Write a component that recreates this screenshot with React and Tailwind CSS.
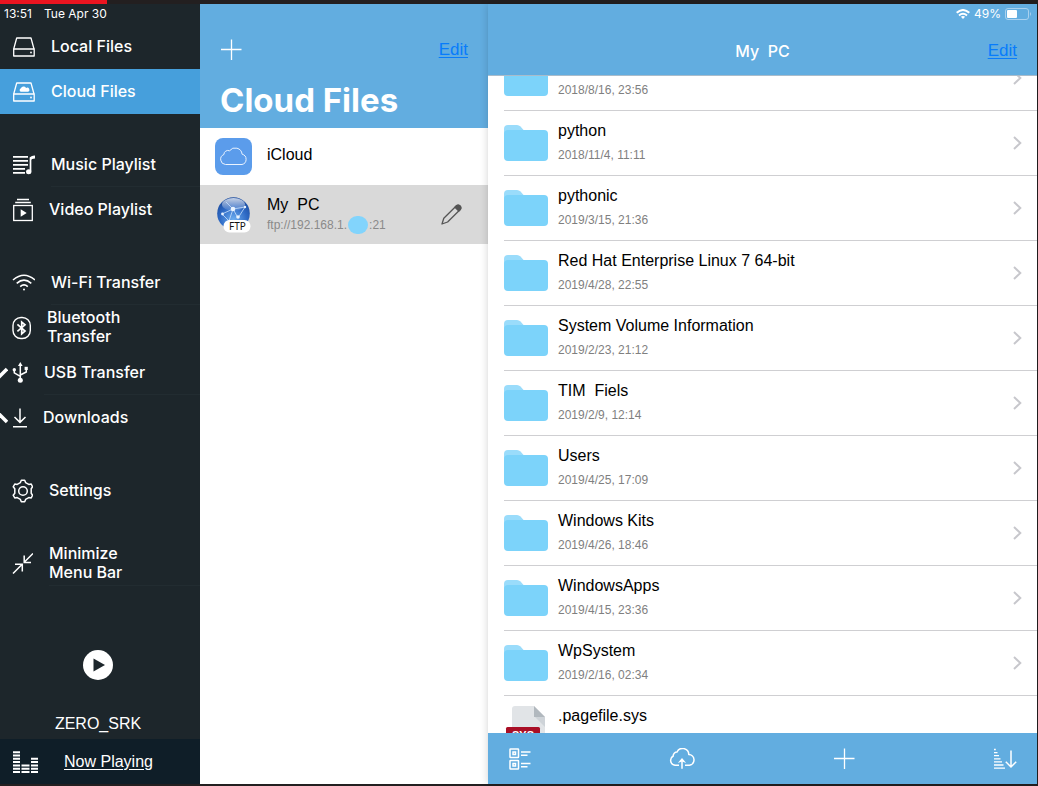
import clsx from 'clsx';

function DriveIcon({ cloud }) {
  return (
    <svg width="23" height="20" viewBox="0 0 23 20" fill="none" stroke="currentColor" strokeWidth="1.3" strokeLinejoin="round">
      <path d="M1.7 12 L4.7 1 H19 L22 12" />
      <rect x="1.7" y="12" width="20.5" height="7" />
      <circle cx="19" cy="15.5" r="0.9" fill="currentColor" stroke="none" />
      {cloud && (
        <path
          d="M8.7 9.8 a1.9 1.9 0 0 1 .2-3.5 a3 3 0 0 1 5.2-.4 a2.1 2.1 0 0 1 2.2 3.9 z"
          fill="currentColor"
          stroke="none"
        />
      )}
    </svg>
  );
}

function MusicListIcon() {
  return (
    <svg width="23" height="20" viewBox="0 0 23 20" fill="none" stroke="currentColor" strokeWidth="1.7">
      <path d="M1 1.8 H16 M1 5.8 H16 M1 9.8 H16 M1 13.8 H13 M1 17.8 H13" />
      <path d="M18.5 16.5 V2.6" />
      <path d="M17.7 2.6 Q18.5 0.8 23 0.4 V3.6 Q19.5 3.8 19.3 5 z" fill="currentColor" stroke="none" />
      <ellipse cx="16.7" cy="16.8" rx="2.7" ry="2.5" fill="currentColor" stroke="none" />
    </svg>
  );
}

function VideoListIcon() {
  return (
    <svg width="21" height="24" viewBox="0 0 21 24" fill="none" stroke="currentColor" strokeWidth="1.3">
      <path d="M5 1.5 H17 M3.2 4.5 H18.8" />
      <rect x="1.7" y="7.5" width="18.6" height="15" />
      <path d="M8.7 11.3 L14.7 15 L8.7 18.7 z" fill="currentColor" stroke="none" />
    </svg>
  );
}

function WifiIcon() {
  return (
    <svg width="23" height="17" viewBox="0 0 23 17" fill="none" stroke="currentColor" strokeWidth="1.6">
      <path d="M1 6 Q12 -3.5 23 6" />
      <path d="M4.7 9.3 Q12 3 19.3 9.3" />
      <path d="M8.2 12.6 Q12 9.2 15.8 12.6" />
      <circle cx="12" cy="15.4" r="1" fill="currentColor" stroke="none" />
    </svg>
  );
}

function BluetoothIcon() {
  return (
    <svg width="19" height="24" viewBox="0 0 19 24" fill="none" stroke="currentColor" strokeWidth="1.4">
      <rect x="1" y="1.5" width="17.3" height="21" rx="8" />
      <path d="M5.4 8.4 L13 15 L9.7 17.8 V6 L13 8.8 L5.4 15.4" strokeWidth="1.7" />
    </svg>
  );
}

function UsbIcon() {
  return (
    <svg width="16" height="21" viewBox="0 0 16 21" fill="none" stroke="currentColor" strokeWidth="1.5">
      <path d="M8.3 3 V17 M2.3 8 V10.8 L8.3 14.4 M14.3 7 V10 L8.3 13" />
      <path d="M8.3 0 L10.6 4 H6 z" fill="currentColor" stroke="none" />
      <circle cx="8.3" cy="18.2" r="2.5" fill="currentColor" stroke="none" />
      <circle cx="2.3" cy="7.8" r="1.7" fill="currentColor" stroke="none" />
      <rect x="12.6" y="4.8" width="3.2" height="3.2" fill="currentColor" stroke="none" />
    </svg>
  );
}

function DownloadIcon() {
  return (
    <svg width="15" height="20" viewBox="0 0 15 20" fill="none" stroke="currentColor" strokeWidth="1.5">
      <path d="M8 0.5 V14 M2.5 9 L8 14.4 L13.5 9 M1 18.8 H15" />
    </svg>
  );
}

function SettingsIcon() {
  return (
    <svg width="21" height="24" viewBox="0 0 21 24" fill="none" stroke="currentColor" strokeWidth="1.5" strokeLinejoin="round">
      <path d="M9.3 1.3 H12.7 L13.6 3.6 L16.8 5.4 L19.2 5 L20.6 7.8 L19.2 9.8 V14.2 L20.6 16.2 L19.2 19 L16.8 18.6 L13.6 20.4 L12.7 22.7 H9.3 L8.4 20.4 L5.2 18.6 L2.8 19 L1.2 16.2 L2.8 14.2 V9.8 L1.2 7.8 L2.8 5 L5.2 5.4 L8.4 3.6 z" />
      <circle cx="11" cy="12" r="4.3" />
    </svg>
  );
}

function MinimizeIcon() {
  return (
    <svg width="21" height="21" viewBox="0 0 21 21" fill="none" stroke="currentColor" strokeWidth="1.5">
      <path d="M21 0.5 L12.2 9.2 M12.2 2.5 V9.4 H19" />
      <path d="M1 20.5 L10.2 11.3 M3 11.2 H10.3 V18.5" />
    </svg>
  );
}

function PlusIcon() {
  return (
    <svg width="22" height="22" viewBox="0 0 22 22" stroke="currentColor" strokeWidth="1.3">
      <path d="M11.5 0.5 V21 M1 10.5 H21.5" />
    </svg>
  );
}

function EqualizerIcon() {
  return (
    <svg width="28" height="22" viewBox="0 0 28 22" stroke="currentColor" strokeWidth="7" strokeDasharray="2 1.3">
      <path d="M4.5 22 V0" />
      <path d="M13.5 22 V13" strokeWidth="8" />
      <path d="M22.5 22 V6" />
    </svg>
  );
}

function ICloudIcon() {
  return (
    <svg width="37" height="37" viewBox="0 0 37 37" fill="none">
      <rect width="37" height="37" rx="8" fill="#5b9ceb" />
      <path
        d="M10.5 26.5 a5.2 5.2 0 0 1 -1.6-10 a4 4 0 0 1 5.6-3.7 a7 7 0 0 1 12.6 3.4 a5.3 5.3 0 0 1 -.1 10.3 z"
        stroke="#eaf3ff"
        strokeWidth="1"
      />
    </svg>
  );
}

function FtpIcon() {
  return (
    <svg width="37" height="37" viewBox="0 0 37 37">
      <defs>
        <radialGradient id="globe" cx="0.5" cy="0.7" r="0.7">
          <stop offset="0" stopColor="#6fb0f2" />
          <stop offset="0.6" stopColor="#2e69c4" />
          <stop offset="1" stopColor="#1b4a9c" />
        </radialGradient>
        <linearGradient id="gloss" x1="0" y1="0" x2="0" y2="1">
          <stop offset="0" stopColor="#ffffff" stopOpacity="0.75" />
          <stop offset="1" stopColor="#ffffff" stopOpacity="0.05" />
        </linearGradient>
      </defs>
      <circle cx="18.5" cy="17.5" r="16.3" fill="url(#globe)" />
      <ellipse cx="18.5" cy="8.5" rx="11.5" ry="6.5" fill="url(#gloss)" />
      <g stroke="#c9e0fb" strokeWidth="0.8" fill="none">
        <path d="M7 18 L18 13 L30 11 M18 13 L23 22 L30 11 M18 13 L11 6 M7 18 L14 25 L18 13" />
      </g>
      <g fill="#e8f3ff">
        <circle cx="18" cy="13" r="2.3" />
        <circle cx="7.5" cy="18" r="1.4" />
        <circle cx="23" cy="21" r="1.8" />
        <circle cx="30" cy="11" r="1.2" />
      </g>
      <rect x="8.5" y="24" width="27" height="12.5" rx="6" fill="#ffffff" />
      <text x="22.5" y="34" textAnchor="middle" fontSize="10" fontFamily="Noto Sans, sans-serif" fill="#111111">
        FTP
      </text>
    </svg>
  );
}

function PencilIcon() {
  return (
    <svg width="21" height="21" viewBox="0 0 21 21" fill="none" stroke="#555555" strokeWidth="1.3" strokeLinejoin="round">
      <path d="M1 20 L2.8 14.3 L15.2 2 Q17.2 0.4 19 2 Q20.6 3.8 19 5.8 L6.6 18 z" />
      <path d="M14 3.2 L15.5 1.6 Q17.3 0.4 19 2 Q20.6 3.8 19.2 5.6 L17.8 7 z" fill="#555555" />
    </svg>
  );
}

function FolderIcon() {
  return (
    <svg width="44" height="36" viewBox="0 0 44 36">
      <path d="M0 10 V4 Q0 0 4 0 H13 Q15 0 16.5 1.6 L20 5.5 V10 z" fill="#9adcfb" />
      <rect y="5" width="44" height="31" rx="4" fill="#7cd3fa" />
    </svg>
  );
}

function SysFileIcon() {
  return (
    <svg width="44" height="46" viewBox="0 0 44 46">
      <path d="M11 0 H30 L41 11 V46 H8 V3 Q8 0 11 0 z" fill="#e1e4e7" />
      <path d="M30 0 L41 11 H30 z" fill="#b1b8be" />
      <path d="M31 11 H41 V21 z" fill="#ced3d8" />
      <rect x="2" y="21" width="34" height="19" rx="1.5" fill="#a90f26" />
      <text x="19" y="33" textAnchor="middle" fontSize="11" fontFamily="Liberation Sans, sans-serif" fontWeight="700" fill="#ffffff">
        SYS
      </text>
    </svg>
  );
}

function ChevronIcon() {
  return (
    <svg width="9" height="14" viewBox="0 0 9 14" fill="none" stroke="#c7c7cc" strokeWidth="2">
      <path d="M1 1 L7.3 7 L1 13" />
    </svg>
  );
}

function GridListIcon() {
  return (
    <svg width="22" height="22" viewBox="0 0 22 22" fill="none" stroke="currentColor" strokeWidth="1.5">
      <rect x="1" y="1" width="8.5" height="8.5" rx="0.5" />
      <rect x="1" y="12.5" width="8.5" height="8.5" rx="0.5" />
      <rect x="4" y="4" width="2.5" height="2.5" />
      <rect x="4" y="15.5" width="2.5" height="2.5" />
      <path d="M12 4 H21.5 M12 7.3 H18.5 M12 15.5 H21.5 M12 18.8 H18.5" />
    </svg>
  );
}

function CloudUploadIcon() {
  return (
    <svg width="26" height="21" viewBox="0 0 26 21" fill="none" stroke="currentColor" strokeWidth="1.5">
      <path d="M10 17.3 H6 A5 5 0 0 1 4.2 8 A3.8 3.8 0 0 1 8 4 A6.2 6.2 0 0 1 19.8 6.4 A5.5 5.5 0 0 1 20.5 17.3 H16" />
      <path d="M13 20.8 V11" />
      <path d="M8.8 15 L13 10 L17.2 15 L13 13.4 z" fill="currentColor" stroke="none" />
    </svg>
  );
}

function SortIcon() {
  return (
    <svg width="24" height="22" viewBox="0 0 24 22" fill="none" stroke="currentColor" strokeWidth="1.3">
      <path d="M1 1.5 H2.8 M1 4.6 H4.5 M1 7.7 H6 M1 10.8 H7.5 M1 13.9 H9 M1 17 H10.5 M1 20.2 H12" />
      <path d="M18 2.5 V19 M12.8 13.8 L18 19 L23.2 13.8" strokeWidth="1.5" />
    </svg>
  );
}

function StatusWifiIcon() {
  return (
    <svg width="14" height="10" viewBox="0 0 14 10" fill="none" stroke="currentColor" strokeWidth="2">
      <path d="M0.7 3.8 Q7 -1.8 13.3 3.8" />
      <path d="M3 6.4 Q7 3 11 6.4" />
      <path d="M4.9 7.8 Q7 6.2 9.1 7.8 L7 10 z" fill="currentColor" stroke="none" />
    </svg>
  );
}

function BatteryIcon() {
  return (
    <svg width="27" height="12" viewBox="0 0 27 12" fill="none">
      <rect x="0.5" y="0.5" width="23" height="11" rx="2.5" stroke="#a9d1ef" />
      <rect x="2" y="2" width="10" height="8" rx="1" fill="#ffffff" />
      <path d="M25 4 Q27 6 25 8 z" fill="#a9d1ef" />
    </svg>
  );
}

const menuGroups = [
  [
    { label: 'Local Files', icon: <DriveIcon /> },
    { label: 'Cloud Files', icon: <DriveIcon cloud />, active: true },
  ],
  [
    { label: 'Music Playlist', icon: <MusicListIcon />, divider: true },
    { label: 'Video Playlist', icon: <VideoListIcon /> },
  ],
  [
    { label: 'Wi-Fi Transfer', icon: <WifiIcon />, divider: true },
    { label: 'Bluetooth Transfer', icon: <BluetoothIcon />, wrap: true },
    { label: 'USB Transfer', icon: <UsbIcon />, mark: 'M-2 11 L7 2', divider: true },
    { label: 'Downloads', icon: <DownloadIcon />, mark: 'M-2 1 L7 10' },
  ],
  [{ label: 'Settings', icon: <SettingsIcon /> }],
  [{ label: 'Minimize Menu Bar', icon: <MinimizeIcon />, wrap: true, divider: true }],
];

// the first row is scrolled half under the header, only its date shows
const files = [
  { date: '2018/8/16, 23:56' },
  { name: 'python', date: '2018/11/4, 11:11' },
  { name: 'pythonic', date: '2019/3/15, 21:36' },
  { name: 'Red Hat Enterprise Linux 7 64-bit', date: '2019/4/28, 22:55' },
  { name: 'System Volume Information', date: '2019/2/23, 21:12' },
  { name: 'TIM  Fiels', date: '2019/2/9, 12:14' },
  { name: 'Users', date: '2019/4/25, 17:09' },
  { name: 'Windows Kits', date: '2019/4/26, 18:46' },
  { name: 'WindowsApps', date: '2019/4/15, 23:36' },
  { name: 'WpSystem', date: '2019/2/16, 02:34' },
];

function MenuItem({ item }) {
  return (
    <button
      type="button"
      className={clsx(
        'relative flex h-[45px] w-full items-center gap-4 pl-3 text-left',
        item.active && 'bg-[#469fdc]'
      )}
    >
      {item.mark && (
        <svg className="absolute left-0" width="8" height="12" viewBox="0 0 8 12">
          <path d={item.mark} stroke="#ffffff" strokeWidth="3.5" />
        </svg>
      )}
      <span className="shrink-0">{item.icon}</span>
      <span
        className={clsx(
          'flex h-full flex-1 items-center border-b',
          item.divider ? 'border-[#222c31]' : 'border-transparent'
        )}
      >
        <span className={item.wrap ? 'w-24' : 'whitespace-nowrap'}>{item.label}</span>
      </span>
    </button>
  );
}

function Sidebar() {
  return (
    <aside className="flex w-[200px] shrink-0 flex-col bg-[#1d262b] text-white">
      <div className="flex h-5 shrink-0 items-center gap-3 pl-1 font-['Inter'] text-[12px]">
        <span>13:51</span>
        <span>Tue Apr 30</span>
      </div>
      <nav className="flex flex-col gap-7 font-['Inter'] text-[16px] leading-[19px] font-medium">
        {menuGroups.map((group, i) => (
          <div key={i}>
            {group.map((item) => (
              <MenuItem key={item.label} item={item} />
            ))}
          </div>
        ))}
      </nav>
      <div className="mt-auto flex flex-col items-center gap-8 pr-1 pb-[3px]">
        <button type="button" aria-label="Play">
          <svg width="30" height="30" viewBox="0 0 30 30">
            <circle cx="15" cy="15" r="15" fill="#ffffff" />
            <path d="M10.5 8.5 L22 15 L10.5 21.5 z" fill="#1d262b" />
          </svg>
        </button>
        <span className="text-[16px] leading-6">ZERO_SRK</span>
      </div>
      <div className="flex h-[45px] shrink-0 items-center gap-6 bg-[#0f1e28] pl-3">
        <EqualizerIcon />
        <a href="#playing" className="text-[16px] underline underline-offset-2">
          Now Playing
        </a>
      </div>
    </aside>
  );
}

function CloudPanel() {
  return (
    <section className="flex w-72 shrink-0 flex-col bg-white">
      <header className="bg-[#62ade0] px-5 pt-5 text-white">
        <div className="flex h-[52px] items-center justify-between">
          <button type="button" aria-label="Add">
            <PlusIcon />
          </button>
          <a href="#edit" className="text-[17px] text-[#087cfb] underline underline-offset-2">
            Edit
          </a>
        </div>
        <h1 className="h-[52px] font-['Inter'] text-[33px] leading-[48px] font-bold">Cloud Files</h1>
      </header>
      <ul>
        <li className="flex h-[57px] items-center gap-[15px] pl-[15px]">
          <ICloudIcon />
          <span className="pb-1 text-[16px]">iCloud</span>
        </li>
        <li className="flex h-[59px] items-center gap-[15px] bg-[#d9d9d9] pr-[26px] pl-[15px]">
          <FtpIcon />
          <div className="flex flex-1 flex-col">
            <span className="text-[16px] leading-5 whitespace-pre">My  PC</span>
            <span className="flex items-center text-[12px] leading-5 text-[#8a8a8a]">
              ftp://192.168.1.
              <span className="mx-px h-[18px] w-5 rounded-full bg-[#82d4fc]" />
              :21
            </span>
          </div>
          <button type="button" aria-label="Edit My PC">
            <PencilIcon />
          </button>
        </li>
      </ul>
    </section>
  );
}

function FileRow({ icon, name, date }) {
  return (
    <li className="ml-4 flex h-[65px] gap-[10px] border-b border-[#cfcfd2]">
      <span className="shrink-0 pt-[14px]">{icon}</span>
      <div className="flex-1 pt-2">
        <p className="h-6 text-[16px] leading-6 whitespace-pre">{name}</p>
        <p className="text-[12px] leading-6 text-[#7f7f7f]">{date}</p>
      </div>
      <span className="flex items-center pr-[15px]">
        <ChevronIcon />
      </span>
    </li>
  );
}

function FilesPanel() {
  return (
    <main className="z-10 flex min-w-0 flex-1 flex-col bg-white shadow-[0_0_8px_rgba(0,0,0,0.18)]">
      <header className="shrink-0 border-b border-[#a9bccb] bg-[#62ade0] text-white">
        <div className="flex h-5 items-center justify-end gap-1 pr-[5px] font-['Inter'] text-[12px]">
          <StatusWifiIcon />
          <span>49%</span>
          <BatteryIcon />
        </div>
        <div className="grid h-[51px] grid-cols-3 items-center px-5 pt-[2px]">
          <h2 className="col-start-2 text-center font-['Inter'] text-[16px] font-medium whitespace-pre">My  PC</h2>
          <a href="#edit" className="justify-self-end text-[17px] text-[#087cfb] underline underline-offset-2">
            Edit
          </a>
        </div>
      </header>
      <div className="min-h-0 flex-1 overflow-hidden">
        <ul className="-mt-[30px]">
          {files.map((file) => (
            <FileRow key={file.date} icon={<FolderIcon />} name={file.name} date={file.date} />
          ))}
          <li className="ml-4 flex h-[65px] gap-[10px]">
            <span className="shrink-0 pt-[10px]">
              <SysFileIcon />
            </span>
            <p className="pt-2 text-[16px] leading-6">.pagefile.sys</p>
          </li>
        </ul>
      </div>
      <footer className="flex h-[51px] shrink-0 items-center justify-between bg-[#62ade0] px-5 text-white">
        <button type="button" aria-label="View" className="flex w-6 justify-center">
          <GridListIcon />
        </button>
        <button type="button" aria-label="Upload" className="flex w-[26px] justify-center">
          <CloudUploadIcon />
        </button>
        <button type="button" aria-label="Add" className="flex w-6 justify-center">
          <PlusIcon />
        </button>
        <button type="button" aria-label="Sort" className="flex w-6 justify-center">
          <SortIcon />
        </button>
      </footer>
    </main>
  );
}

export default function App() {
  return (
    <div className="flex h-screen flex-col bg-[#231f20] pr-px pb-[2px] font-['Liberation_Sans',sans-serif] text-black">
      <div className="h-1 shrink-0">
        <div className="h-full w-[10.3%] bg-[#ea1420]" />
      </div>
      <div className="flex min-h-0 flex-1">
        <Sidebar />
        <CloudPanel />
        <FilesPanel />
      </div>
    </div>
  );
}
